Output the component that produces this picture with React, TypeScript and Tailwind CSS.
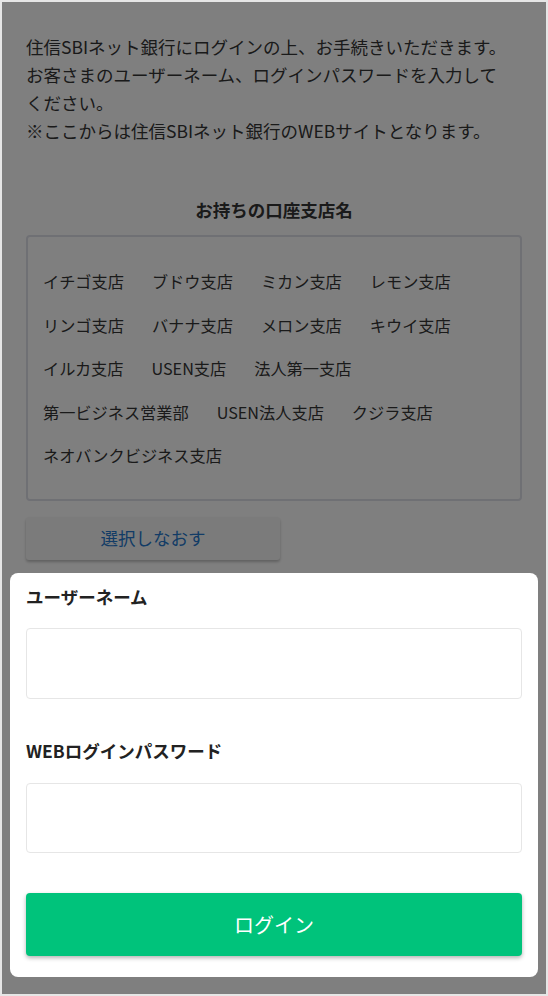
const branches = [
  "イチゴ支店",
  "ブドウ支店",
  "ミカン支店",
  "レモン支店",
  "リンゴ支店",
  "バナナ支店",
  "メロン支店",
  "キウイ支店",
  "イルカ支店",
  "USEN支店",
  "法人第一支店",
  "第一ビジネス営業部",
  "USEN法人支店",
  "クジラ支店",
  "ネオバンクビジネス支店",
];

export default function App() {
  return (
    <div
      className="relative h-[996px] w-full overflow-hidden border-2 border-[#e6e6e6] bg-white text-[#343434]"
      style={{ fontFamily: '"Noto Sans CJK JP", "Noto Sans", sans-serif' }}
    >
      {/* page behind the sheet */}
      <div className="px-6 pt-[31px]">
        <p className="text-[17.5px] leading-[28px]">
          住信SBIネット銀行にログインの上、お手続きいただきます。
          <br />
          お客さまのユーザーネーム、ログインパスワードを入力して
          <br />
          ください。
          <br />
          ※ここからは住信SBIネット銀行のWEBサイトとなります。
        </p>

        <h2 className="mt-[51px] text-center text-[17.5px] font-bold leading-[28px]">
          お持ちの口座支店名
        </h2>

        <div className="mt-[11px] rounded-[4px] border-2 border-[#dfe0e9] px-[15px] py-[32px]">
          <ul className="flex flex-wrap gap-x-[28px] gap-y-[19.5px]">
            {branches.map((b) => (
              <li key={b} className="text-[16.2px] leading-[24px]">
                {b}
              </li>
            ))}
          </ul>
        </div>

        <button className="mt-[16px] flex h-[43px] w-[254px] items-center justify-center rounded-[3px] bg-[#f7f7f7] text-[17.5px] text-[#2578cc] shadow-[0_2px_3px_rgba(0,0,0,0.25)]">
          選択しなおす
        </button>
      </div>

      {/* dim overlay */}
      <div className="absolute inset-0 bg-black/50" />

      {/* login sheet */}
      <div className="absolute bottom-[17px] left-2 right-2 rounded-lg bg-white px-4 pb-[21px] pt-[12px]">
        <label className="block text-[17.5px] font-bold leading-6 text-[#222]">
          ユーザーネーム
        </label>
        <input
          type="text"
          className="mt-[19px] block h-[71px] w-full rounded-[4px] border border-[#e6e6e6] outline-none"
        />

        <label className="mt-[40px] block text-[17.5px] font-bold leading-6 text-[#222]">
          WEBログインパスワード
        </label>
        <input
          type="password"
          className="mt-[20px] block h-[70px] w-full rounded-[4px] border border-[#e6e6e6] outline-none"
        />

        <button className="mt-[40px] flex h-[63px] w-full items-center justify-center rounded-[4px] bg-[#00c37b] text-[20px] text-white shadow-[0_2px_4px_rgba(0,0,0,0.3)]">
          ログイン
        </button>
      </div>
    </div>
  );
}
